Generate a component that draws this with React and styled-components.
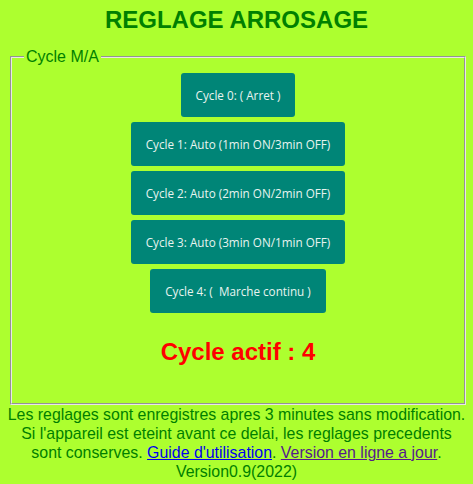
import styled, { createGlobalStyle } from 'styled-components';

const GREEN = '#008000';
const LIME = '#adff2f';
const TEAL = '#008577';

const cycles = [
	'Cycle 0: ( Arret )',
	'Cycle 1: Auto (1min ON/3min OFF)',
	'Cycle 2: Auto (2min ON/2min OFF)',
	'Cycle 3: Auto (3min ON/1min OFF)',
	'Cycle 4: (  Marche continu )',
];

const GlobalStyle = createGlobalStyle`
	html, body {
		margin: 0;
		background: ${LIME};
	}
	body {
		font-family: "Liberation Sans", Arial, sans-serif;
	}
`;

export default function App() {
	return (
		<StyledPage>
			<GlobalStyle />
			<StyledTitle>REGLAGE ARROSAGE</StyledTitle>
			<StyledFieldset>
				<StyledLegend>Cycle M/A</StyledLegend>
				<StyledButtons>
					{cycles.map((label) => (
						<StyledButton key={label}>{label}</StyledButton>
					))}
				</StyledButtons>
				<StyledActive>Cycle actif : 4</StyledActive>
			</StyledFieldset>
			<StyledFooter>
				Les reglages sont enregistres apres 3 minutes sans modification.
				<br />
				Si l'appareil est eteint avant ce delai, les reglages precedents
				<br />
				sont conserves. <StyledLink href="#guide">Guide d'utilisation</StyledLink>.{' '}
				<StyledLink href="#maj" $visited>Version en ligne a jour</StyledLink>.
				<br />
				Version0.9(2022)
			</StyledFooter>
		</StyledPage>
	);
}

const StyledPage = styled.div`
	padding: 6px 0 0;
`;

const StyledTitle = styled.h1`
	margin: 0 0 14px;
	font-size: 24px;
	line-height: 28px;
	text-align: center;
	color: ${GREEN};
`;

const StyledFieldset = styled.fieldset`
	margin: 0 7px 0 10px;
	padding: 7px 12px 0;
	border: 2px groove #e8e8e8;
	display: flex;
	flex-direction: column;
	align-items: center;
	height: 357px;
	box-sizing: border-box;
`;

const StyledLegend = styled.legend`
	padding: 0 2px;
	font-size: 16px;
	color: ${GREEN};
`;

const StyledButtons = styled.div`
	display: flex;
	flex-direction: column;
	align-items: center;
	gap: 5px;
`;

const StyledButton = styled.button`
	height: 44px;
	padding: 0 15px;
	border: none;
	border-radius: 3px;
	background: ${TEAL};
	color: #e8f4f0;
	font-family: "Open Sans", "Noto Sans", sans-serif;
	font-size: 11.7px;
	white-space: pre;
	cursor: pointer;
`;

const StyledActive = styled.div`
	margin-top: 25px;
	font-size: 24px;
	font-weight: bold;
	color: #ff0000;
`;

const StyledFooter = styled.p`
	margin: 0;
	font-size: 15.9px;
	line-height: 19px;
	text-align: center;
	white-space: nowrap;
	color: ${GREEN};
`;

const StyledLink = styled.a`
	color: ${(p) => (p.$visited ? '#551a8b' : '#0000ee')};
`;
